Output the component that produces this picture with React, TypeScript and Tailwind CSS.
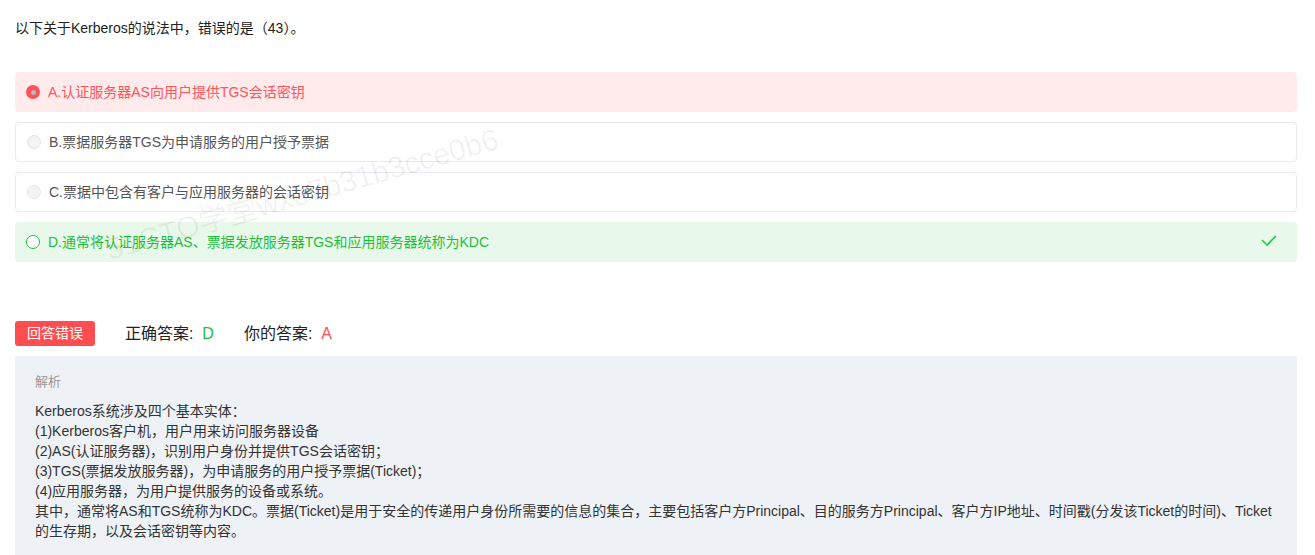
import React from "react";

const font = { fontFamily: '"Liberation Sans", Arial, "Noto Sans CJK SC", sans-serif' };

function Radio({ kind }: { kind: "wrong" | "plain" | "right" }) {
  if (kind === "wrong")
    return (
      <span className="flex h-[14px] w-[14px] shrink-0 items-center justify-center rounded-full bg-[#ff5257]">
        <span className="h-[5px] w-[5px] rounded-full bg-[#b8b8c0]" />
      </span>
    );
  if (kind === "right")
    return <span className="h-[14px] w-[14px] shrink-0 rounded-full border border-[#21c03d] bg-white" />;
  return <span className="h-[14px] w-[14px] shrink-0 rounded-full border border-[#e3e5ec] bg-[#f3f4f8]" />;
}

export default function App() {
  const options = [
    { kind: "wrong" as const, text: "A.认证服务器AS向用户提供TGS会话密钥" },
    { kind: "plain" as const, text: "B.票据服务器TGS为申请服务的用户授予票据" },
    { kind: "plain" as const, text: "C.票据中包含有客户与应用服务器的会话密钥" },
    { kind: "right" as const, text: "D.通常将认证服务器AS、票据发放服务器TGS和应用服务器统称为KDC" },
  ];
  const lines = [
    "Kerberos系统涉及四个基本实体：",
    "(1)Kerberos客户机，用户用来访问服务器设备",
    "(2)AS(认证服务器)，识别用户身份并提供TGS会话密钥；",
    "(3)TGS(票据发放服务器)，为申请服务的用户授予票据(Ticket)；",
    "(4)应用服务器，为用户提供服务的设备或系统。",
    "其中，通常将AS和TGS统称为KDC。票据(Ticket)是用于安全的传递用户身份所需要的信息的集合，主要包括客户方Principal、目的服务方Principal、客户方IP地址、时间戳(分发该Ticket的时间)、Ticket的生存期，以及会话密钥等内容。",
  ];
  return (
    <div className="relative min-h-[555px] overflow-hidden bg-white pl-[15px] pr-[18px] pt-[18px] text-[#333]" style={font}>
      <div className="text-[14px] leading-[20px] text-[#222]">以下关于Kerberos的说法中，错误的是（43）。</div>

      <div className="mt-[34px] flex flex-col gap-[10px]">
        {options.map((o, i) => {
          const box =
            o.kind === "wrong"
              ? "bg-[#ffebec] text-[#ff555b]"
              : o.kind === "right"
              ? "bg-[#e8f9eb] text-[#1fbf3c]"
              : "border border-[#e8e9f1] bg-white text-[#555]";
          return (
            <div key={i} className={`flex h-10 items-center rounded-[4px] pl-[11px] pr-[19px] text-[14px] ${box}`}>
              <Radio kind={o.kind} />
              <span className="ml-[8px] flex-1">{o.text}</span>
              {o.kind === "right" && (
                <svg width="18" height="14" viewBox="0 0 18 14" className="shrink-0">
                  <polyline points="2,5 7,10 16,1" fill="none" stroke="#2ac64a" strokeWidth="1.6" />
                </svg>
              )}
            </div>
          );
        })}
      </div>

      <div className="mt-[59px] flex h-[25px] items-center">
        <span className="flex h-[25px] w-[80px] items-center justify-center rounded-[3px] bg-[#ff4d51] text-[14px] text-white">回答错误</span>
        <span className="ml-[30px] text-[16px] text-[#222]">
          正确答案:&nbsp;&nbsp;<span className="text-[#21c03d]">D</span>
        </span>
        <span className="ml-[30px] text-[16px] text-[#222]">
          你的答案:&nbsp;&nbsp;<span className="text-[#ff4d55]">A</span>
        </span>
      </div>

      <div className="mt-[10px] bg-[#eef1f6] px-[20px] pb-[20px] pt-[16px]">
        <div className="text-[13px] leading-[20px] text-[#999]">解析</div>
        <div className="mt-[9px] text-[14px] leading-[20px] text-[#333]">
          {lines.map((l, i) => (
            <div key={i}>{l}</div>
          ))}
        </div>
      </div>

      <div className="pointer-events-none absolute left-[302px] top-[194px] -translate-x-1/2 -translate-y-1/2 -rotate-[16deg] whitespace-nowrap text-[30px] text-black/[0.06]">
        51CTO学堂wxe7b31b3cce0b6
      </div>
    </div>
  );
}
